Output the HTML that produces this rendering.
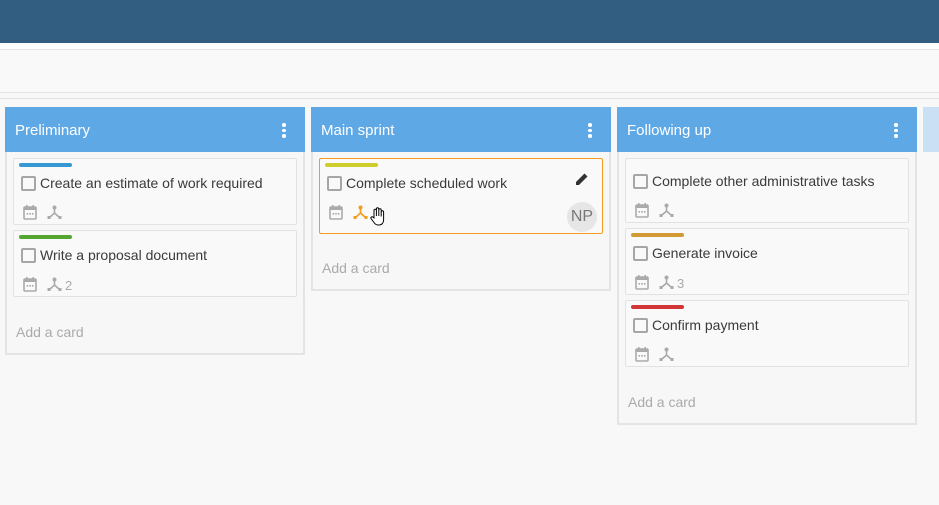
<!DOCTYPE html>
<html><head><style>
*{margin:0;padding:0;box-sizing:border-box}
body{width:939px;height:505px;background:#f8f8f8;font-family:"Liberation Sans",Arial,sans-serif;position:relative;overflow:hidden}
.abs{position:absolute}
.hdr{left:0;top:0;width:939px;height:43px;background:#325e82}
.col{position:absolute;width:300px;border:2px solid #e4e4e4;border-top:none;background:#f7f7f7}
.ch{position:absolute;left:-2px;top:-45px;width:300px;height:45px;background:#5fa8e6;color:#fff;font-size:15px;line-height:47px;padding-left:10px}
.dots{position:absolute;right:19px;top:16px;width:4px}
.dots i{display:block;width:3.5px;height:3.5px;border-radius:50%;background:#fff;margin-bottom:2px}
.card{position:absolute;left:6px;width:284px;border:1px solid #e2e2e2;border-radius:2px;background:#f9f9f9}
.lbl{position:absolute;left:5px;top:4px;width:53px;height:4px;border-radius:2px}
.cb{position:absolute;left:7px;width:15px;height:15px;border:2px solid #a6a6a6;border-radius:2px}
.t{position:absolute;left:26px;font-size:14px;color:#3a3a3a;white-space:nowrap}
.ic{position:absolute}
.add{position:absolute;left:9px;font-size:14px;color:#aaa}
.n{position:absolute;font-size:13px;color:#aaa}
</style></head><body>
<div class="abs hdr"></div>
<div class="abs" style="left:0;top:43px;width:939px;height:6px;background:#fff"></div>
<div class="abs" style="left:0;top:49px;width:939px;height:1px;background:#e4e4e4"></div>
<div class="abs" style="left:0;top:50px;width:939px;height:42px;background:#f9f9f9"></div>
<div class="abs" style="left:0;top:92px;width:939px;height:1px;background:#e4e4e4"></div>
<div class="abs" style="left:0;top:98px;width:939px;height:1px;background:#e4e4e4"></div>

<svg width="0" height="0" style="position:absolute"><defs>
<g id="cal"><rect x="1" y="2" width="12" height="12" rx="1" fill="none" stroke="#aaa" stroke-width="1.6"/><rect x="1" y="2" width="12" height="3" fill="#aaa"/><rect x="3" y="0" width="1.6" height="3" fill="#aaa"/><rect x="9.4" y="0" width="1.6" height="3" fill="#aaa"/><rect x="3.5" y="8" width="1.6" height="1.6" fill="#aaa"/><rect x="6.2" y="8" width="1.6" height="1.6" fill="#aaa"/><rect x="8.9" y="8" width="1.6" height="1.6" fill="#aaa"/></g>
</defs></svg>

<!-- column 1 -->
<div class="col" style="left:5px;top:152px;height:203px">
<div class="ch">Preliminary<div class="dots"><i></i><i></i><i></i></div></div>
<div class="card" style="top:6px;height:67px">
 <div class="lbl" style="background:#3598d2"></div>
 <div class="cb" style="top:17px"></div><div class="t" style="top:16px">Create an estimate of work required</div>
 <svg class="ic" style="left:9px;top:46px" width="15" height="15"><use href="#cal"/></svg>
 <svg class="ic" style="left:33px;top:46px" width="15" height="15"><path d="M7.5 2V8L2.5 12.5M7.5 8L12.5 12.5" stroke="#aaa" stroke-width="1.6" fill="none"/><circle cx="7.5" cy="2.5" r="2" fill="#aaa"/><rect x="0.5" y="11" width="3" height="3" fill="#aaa"/><rect x="11.5" y="11" width="3" height="3" fill="#aaa"/></svg>
</div>
<div class="card" style="top:78px;height:67px">
 <div class="lbl" style="background:#55a630"></div>
 <div class="cb" style="top:17px"></div><div class="t" style="top:16px">Write a proposal document</div>
 <svg class="ic" style="left:9px;top:46px" width="15" height="15"><use href="#cal"/></svg>
 <svg class="ic" style="left:33px;top:46px" width="15" height="15"><path d="M7.5 2V8L2.5 12.5M7.5 8L12.5 12.5" stroke="#aaa" stroke-width="1.6" fill="none"/><circle cx="7.5" cy="2.5" r="2" fill="#aaa"/><rect x="0.5" y="11" width="3" height="3" fill="#aaa"/><rect x="11.5" y="11" width="3" height="3" fill="#aaa"/></svg>
 <div class="n" style="left:51px;top:47px">2</div>
</div>
<div class="add" style="top:172px">Add a card</div>
</div>

<!-- column 2 -->
<div class="col" style="left:311px;top:152px;height:139px">
<div class="ch">Main sprint<div class="dots"><i></i><i></i><i></i></div></div>
<div class="card" style="top:6px;height:76px;border-color:#f39c1f">
 <div class="lbl" style="background:#cfcd2a"></div>
 <div class="cb" style="top:17px"></div><div class="t" style="top:16px">Complete scheduled work</div>
 <svg class="ic" style="left:255px;top:13px" width="14" height="14"><path d="M1 13V10L9.5 1.5L12.5 4.5L4 13Z" fill="#333"/></svg>
 <svg class="ic" style="left:9px;top:46px" width="15" height="15"><use href="#cal"/></svg>
 <svg class="ic" style="left:33px;top:46px" width="15" height="15"><path d="M7.5 2V8L2.5 12.5M7.5 8L12.5 12.5" stroke="#f39c1f" stroke-width="1.6" fill="none"/><circle cx="7.5" cy="2.5" r="2" fill="#f39c1f"/><rect x="0.5" y="11" width="3" height="3" fill="#f39c1f"/><rect x="11.5" y="11" width="3" height="3" fill="#f39c1f"/></svg>
 <svg class="ic" style="left:49px;top:48px" width="18" height="20"><path d="M5 11V3.5a1.2 1.2 0 0 1 2.4 0V9V2a1.2 1.2 0 0 1 2.4 0V9V3a1.2 1.2 0 0 1 2.4 0V9.5V5a1.2 1.2 0 0 1 2.4 0V13c0 3-2 5-4.5 5H9c-2 0-3-1-4-2.5L2 11.5a1.2 1.2 0 0 1 2-1.3Z" fill="#fff" stroke="#000" stroke-width="1"/></svg>
 <div class="abs" style="left:247px;top:43px;width:30px;height:30px;border-radius:50%;background:#e6e6e6;color:#777;font-size:16px;line-height:30px;text-align:center">NP</div>
</div>
<div class="add" style="top:108px">Add a card</div>
</div>

<!-- column 3 -->
<div class="col" style="left:617px;top:152px;height:273px">
<div class="ch">Following up<div class="dots"><i></i><i></i><i></i></div></div>
<div class="card" style="top:6px;height:65px">
 <div class="cb" style="top:15px"></div><div class="t" style="top:14px">Complete other administrative tasks</div>
 <svg class="ic" style="left:9px;top:44px" width="15" height="15"><use href="#cal"/></svg>
 <svg class="ic" style="left:33px;top:44px" width="15" height="15"><path d="M7.5 2V8L2.5 12.5M7.5 8L12.5 12.5" stroke="#aaa" stroke-width="1.6" fill="none"/><circle cx="7.5" cy="2.5" r="2" fill="#aaa"/><rect x="0.5" y="11" width="3" height="3" fill="#aaa"/><rect x="11.5" y="11" width="3" height="3" fill="#aaa"/></svg>
</div>
<div class="card" style="top:76px;height:67px">
 <div class="lbl" style="background:#d29a34"></div>
 <div class="cb" style="top:17px"></div><div class="t" style="top:16px">Generate invoice</div>
 <svg class="ic" style="left:9px;top:46px" width="15" height="15"><use href="#cal"/></svg>
 <svg class="ic" style="left:33px;top:46px" width="15" height="15"><path d="M7.5 2V8L2.5 12.5M7.5 8L12.5 12.5" stroke="#aaa" stroke-width="1.6" fill="none"/><circle cx="7.5" cy="2.5" r="2" fill="#aaa"/><rect x="0.5" y="11" width="3" height="3" fill="#aaa"/><rect x="11.5" y="11" width="3" height="3" fill="#aaa"/></svg>
 <div class="n" style="left:51px;top:47px">3</div>
</div>
<div class="card" style="top:148px;height:67px">
 <div class="lbl" style="background:#d13535"></div>
 <div class="cb" style="top:17px"></div><div class="t" style="top:16px">Confirm payment</div>
 <svg class="ic" style="left:9px;top:46px" width="15" height="15"><use href="#cal"/></svg>
 <svg class="ic" style="left:33px;top:46px" width="15" height="15"><path d="M7.5 2V8L2.5 12.5M7.5 8L12.5 12.5" stroke="#aaa" stroke-width="1.6" fill="none"/><circle cx="7.5" cy="2.5" r="2" fill="#aaa"/><rect x="0.5" y="11" width="3" height="3" fill="#aaa"/><rect x="11.5" y="11" width="3" height="3" fill="#aaa"/></svg>
</div>
<div class="add" style="top:242px">Add a card</div>
</div>

<div class="abs" style="left:923px;top:107px;width:20px;height:45px;background:#c9e0f5"></div>
</body></html>
